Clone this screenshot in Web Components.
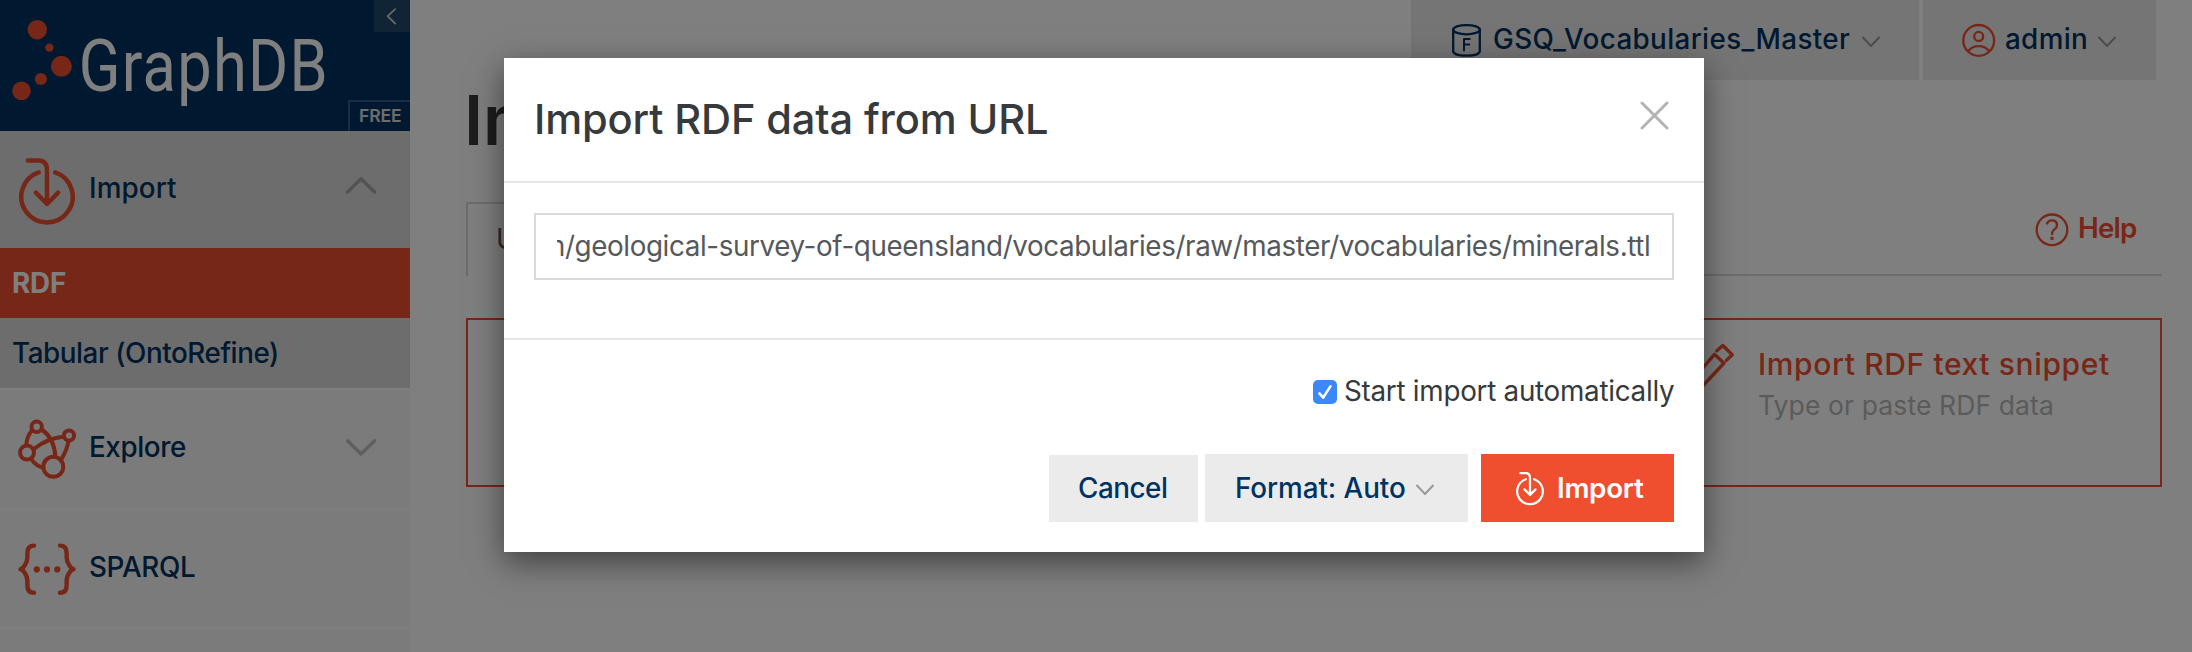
<!DOCTYPE html>
<html lang="en">
<head>
<meta charset="utf-8">
<title>GraphDB Workbench</title>
<style>
html,body{margin:0;height:100%;overflow:hidden;background:#fff}
body{font-family:Inter,"Liberation Sans",sans-serif;--navy:#003361;--orange:#ef4e2f}
</style>
</head>
<body>
<gdb-app></gdb-app>
<script>
const sheet = (el, html) => { el.attachShadow({mode:'open'}).innerHTML = html; };

/* Text whose inked width is w pixels; spacing is spread between the letters. */
const pen = document.createElement('canvas').getContext('2d');
customElements.define('ui-text', class extends HTMLElement {
  constructor(){ super(); sheet(this, `<style>
    :host{display:block;flex:none;white-space:pre;line-height:1}
    span{display:block}</style><span><slot></slot></span>`); }
  connectedCallback(){
    const a = n => this.getAttribute(n), size = a('size') || 27.8, weight = a('weight') || 500, font = a('font') || 'Inter';
    const span = this.shadowRoot.querySelector('span'), text = this.textContent;
    this.style.fontSize = size + 'px'; this.style.fontWeight = weight; this.style.fontFamily = font + ',sans-serif';
    if (a('w')) {
      pen.font = `${weight} ${size}px ${font}`;
      const m = pen.measureText(text);
      span.style.letterSpacing = (a('w') - m.actualBoundingBoxLeft - m.actualBoundingBoxRight) / (text.length - 1) + 'px';
      span.style.marginLeft = m.actualBoundingBoxLeft + 'px';
      this.style.width = a('w') + 'px';
    }
  }
});

const importShape = '<path d="M38.7 172.4A25.7 25.7 0 1 0 55.3 172.4M27.8 160.4H38.5Q47 160.4 47 170V204M36 192.7L47 204L58 192.7"/>';
const icons = {
  import:['17 156 60 71',4.5,importShape],
  explore:['17 418 60 62',4,'<circle cx="36.7" cy="426.8" r="5.2"/><circle cx="69" cy="435.5" r="5.1"/><circle cx="27" cy="452.6" r="7"/><circle cx="53.3" cy="466.8" r="10"/><path d="M31.8 430.5Q26.5 437 26.3 445.5M41.8 429.5Q54.5 438.5 55.3 456.5M33.8 449Q48 438 63.5 436.8M68.5 441Q67 450 61.5 459M31 458.8Q36.5 466.5 43.3 467.5"/>'],
  sparql:['17 541 60 57',4.4,'<path d="M34 545.6Q27.4 545.6 27.4 553V557C27.4 564 22 569.2 20.5 569.2C22 569.2 27.4 574 27.4 581V585.5Q27.4 592.8 34 592.8M60 545.6Q66.6 545.6 66.6 553V557C66.6 564 72 569.2 73.5 569.2C72 569.2 66.6 574 66.6 581V585.5Q66.6 592.8 60 592.8"/><g fill="currentColor" stroke="none"><circle cx="36.8" cy="569.4" r="3.1"/><circle cx="47" cy="569.4" r="3.1"/><circle cx="57.3" cy="569.4" r="3.1"/></g>'],
  up:['345 177 32 18',3.4,'<path d="M347.6 192L361 178.8L374.6 192"/>'],
  down:['345 438 32 18',3.4,'<path d="M347.6 440.7L361 454L374.6 440.7"/>'],
  caret:['0 0 20 12',2,'<path d="M2 1.5L10 10L18 1.5"/>'],
  left:['385 7 14 18',1.6,'<path d="M395.3 9L387.6 16.2L395.3 23.6"/>'],
  close:['1639 100 30 30',3,'<path d="M1642 103L1667 128M1667 103L1642 128"/>'],
  db:['1450 22 33 37',2.3,'<ellipse cx="1466.5" cy="29.7" rx="13.3" ry="4.6"/><path d="M1453.2 29.7V51C1453.2 54 1459 55.7 1466.5 55.7S1479.8 54 1479.8 51V29.7"/><path stroke-width="2" d="M1464 50.5V39H1469.8M1464 44.5H1469.2"/>'],
  user:['1961 22 36 37',2.3,'<circle cx="1978.7" cy="40.4" r="15.4"/><circle cx="1978.7" cy="36.4" r="4.5"/><path d="M1968.3 51Q1972.3 46.2 1978.7 46.2T1989.1 51"/>'],
  help:['2034 212 36 36',2.3,'<circle cx="2052" cy="229.8" r="15.3"/><path d="M2047 223.5Q2048.3 220.3 2052 220.3Q2057 220.3 2057 225Q2057 227.3 2054.8 229.1Q2052 231.1 2052 234.2"/><circle cx="2052" cy="238.3" r=".7"/>'],
  pencil:['1684 342 54 64',3.4,'<path d="M1716.8 350.8L1722.8 345.5L1732.2 354.8L1726.4 360.4M1714.4 354.3L1724 363.2L1697 392L1687 396L1690 383Z"/>'],
  dots:['10 18 64 84',0,'<g fill="currentColor"><circle cx="37.3" cy="29.7" r="9.7"/><circle cx="49.4" cy="47.6" r="4.2"/><circle cx="61.4" cy="66.3" r="10.5"/><circle cx="40.9" cy="79" r="6.1"/><circle cx="21.5" cy="90.8" r="9.3"/></g>'],
  check:['0 0 24 24',2.6,'<path d="M6.4 13.4L10.2 17.6L17.4 6.4"/>']
};
customElements.define('ui-icon', class extends HTMLElement {
  constructor(){ super(); sheet(this, '<style>:host{display:block;flex:none}svg{display:block;fill:none;stroke:currentColor;stroke-linecap:round;stroke-linejoin:round}</style><div></div>'); }
  connectedCallback(){
    const [box, sw, body] = icons[this.getAttribute('name')], b = box.split(' ');
    const w = this.getAttribute('width') || b[2], h = this.getAttribute('height') || b[3];
    this.shadowRoot.querySelector('div').innerHTML =
      `<svg width="${w}" height="${h}" viewBox="${box}" stroke-width="${this.getAttribute('stroke') || sw}">${body}</svg>`;
  }
});

customElements.define('gdb-logo', class extends HTMLElement {
  constructor(){ super(); sheet(this, `<style>
    :host{display:block;position:relative;height:131px;background:var(--navy);color:#fff;overflow:hidden}
    .row{display:flex;padding:18px 0 0 10px;gap:8px;height:100%;box-sizing:border-box}
    ui-icon{color:var(--orange)}
    .name{transform:scaleX(.84);transform-origin:0 0;margin-top:12px}
    .fold{position:absolute;right:0;top:0;width:36px;height:32px;background:#20486b;display:flex;align-items:center;justify-content:center}
    .fold ui-icon{color:#ddd}
    .free{position:absolute;right:0;bottom:0;width:60px;height:29px;border:solid #335c81;border-width:2px 0 0 2px;box-sizing:content-box;display:flex;align-items:center;padding-left:0}
    .free ui-text{margin:-1px 0 0 10px;color:#dadada}
    </style><div class="row"><ui-icon name="dots"></ui-icon>
    <ui-text class="name" font="Roboto" size="73" weight="400" w="289">GraphDB</ui-text></div>
    <div class="fold"><ui-icon name="left"></ui-icon></div>
    <div class="free"><ui-text size="17.6" w="41" weight="600">FREE</ui-text></div>`); }
});

customElements.define('nav-item', class extends HTMLElement {
  constructor(){ super(); sheet(this, `<style>
    :host{display:block;background:#f6f6f6;color:var(--navy);border-bottom:2px solid #fff}
    :host([open]){background:#dadada;border:0}
    .row{display:flex;align-items:center;height:var(--h,118px);padding:0 33px 0 17px}
    slot{display:block;margin-left:14px;margin-top:-2px}
    [name=icon]{margin:0;width:60px;color:var(--orange)}
    [name=arrow]{margin-left:auto;margin-top:0;color:#bfbfbf}
    :host([open]) [name=arrow]{color:#a6a6a6}
    </style><div class="row"><slot name="icon"></slot><slot></slot><slot name="arrow"></slot></div>`); }
});

customElements.define('nav-sub', class extends HTMLElement {
  constructor(){ super(); sheet(this, `<style>
    :host{display:flex;align-items:center;height:70px;box-sizing:border-box;padding:2px 0 0 13px;background:#dadada;color:var(--navy)}
    :host([active]){background:var(--orange);color:#fff}
    </style><slot></slot>`); }
});

customElements.define('gdb-sidebar', class extends HTMLElement {
  constructor(){ super(); sheet(this, `<style>
    :host{display:block;background:#f6f6f6;height:652px;overflow:hidden}
    .rule{height:2px;background:#fff}
    </style>
    <gdb-logo></gdb-logo>
    <nav-item open style="--h:117px"><ui-icon slot="icon" name="import" style="margin-top:4px"></ui-icon><ui-text w="85">Import</ui-text><ui-icon slot="arrow" name="up" style="margin-top:-7px"></ui-icon></nav-item>
    <nav-sub active><ui-text w="53" weight="700">RDF</ui-text></nav-sub>
    <nav-sub><ui-text w="264">Tabular (OntoRefine)</ui-text></nav-sub>
    <div class="rule"></div>
    <nav-item><ui-icon slot="icon" name="explore"></ui-icon><ui-text w="95">Explore</ui-text><ui-icon slot="arrow" name="down" style="margin-top:-4px"></ui-icon></nav-item>
    <nav-item style="--h:117px"><ui-icon slot="icon" name="sparql" style="margin-top:1px"></ui-icon><ui-text w="105" style="margin-left:-1px">SPARQL</ui-text></nav-item>`); }
});

customElements.define('gdb-topbar', class extends HTMLElement {
  constructor(){ super(); sheet(this, `<style>
    :host{display:flex;justify-content:flex-end;gap:4px;height:80px;padding-right:36px;color:var(--navy)}
    div{display:flex;align-items:center;background:#ebebeb;box-sizing:border-box}
    .repo{width:508px;padding-left:39px}.user{width:233px;padding-left:38px}
    .repo ui-text{margin:-1px 11px 0}.user ui-text{margin:-1px 11px 0 9px}
    .user ui-icon:first-child{color:var(--orange)}
    .c{color:#999;margin-top:3px}
    </style>
    <div class="repo"><ui-icon name="db"></ui-icon><ui-text w="356">GSQ_Vocabularies_Master</ui-text><ui-icon class="c" name="caret"></ui-icon></div>
    <div class="user"><ui-icon name="user"></ui-icon><ui-text w="80">admin</ui-text><ui-icon class="c" name="caret"></ui-icon></div>`); }
});

customElements.define('gdb-main', class extends HTMLElement {
  constructor(){ super(); sheet(this, `<style>
    :host{display:block;min-width:0}
    .body{padding:6px 30px 0 56px}
    h1{margin:0;height:70px;color:#373a3c}
    .tabs{display:flex;height:74px;margin-top:46px;box-sizing:border-box}
    .tab{width:200px;border:2px solid #d9d9d9;border-bottom:0;box-sizing:border-box;display:flex;align-items:center;padding-left:30px;color:#55595c}
    .rest{flex:1;border-bottom:2px solid #d9d9d9;display:flex;justify-content:flex-end;padding:10px 25px 0 0;gap:10px;color:var(--orange)}
    .rest ui-text{margin-top:3px}
    .actions{display:grid;grid-template-columns:1fr 1fr 476px;height:169px;box-sizing:border-box;border:2px solid var(--orange);margin-top:42px}
    .cell{grid-column:3;display:flex;color:var(--orange);padding:22px 0 0 0;gap:22px}
    .copy{display:flex;flex-direction:column;gap:13px;padding-top:7px}
    .copy ui-text+ui-text{color:#b6b6b6;margin-left:-1px}
    </style>
    <gdb-topbar></gdb-topbar>
    <div class="body">
      <h1><ui-text size="69" style="margin-left:-2px" weight="600">Import</ui-text></h1>
      <div class="tabs"><div class="tab"><ui-text weight="400" w="120">User data</ui-text></div>
        <div class="rest"><ui-icon name="help"></ui-icon><ui-text weight="600" w="57">Help</ui-text></div></div>
      <div class="actions"><div class="cell"><ui-icon name="pencil"></ui-icon>
        <div class="copy"><ui-text size="30" w="349">Import RDF text snippet</ui-text><ui-text size="26.5" weight="400" w="293">Type or paste RDF data</ui-text></div></div></div>
    </div>`); }
});

customElements.define('ui-button', class extends HTMLElement {
  constructor(){ super(); sheet(this, `<style>
    :host{display:flex;align-items:center;height:68px;box-sizing:border-box;background:#ebebeb;color:var(--navy)}
    :host([primary]){background:var(--orange);color:#fff}
    </style><slot></slot>`); }
});

customElements.define('import-dialog', class extends HTMLElement {
  constructor(){ super(); sheet(this, `<style>
    :host{display:block;width:1200px;height:494px;background:#fff;color:#373a3c;box-shadow:0 10px 30px rgba(0,0,0,.5)}
    header{display:flex;justify-content:space-between;height:123px;padding:0 35px 0 33px;border-bottom:2px solid #e5e5e5}
    header ui-text{margin-top:41px}
    header ui-icon{margin-top:42px;color:#b3b3b3}
    .field{height:155px;box-sizing:border-box;padding:30px 30px 0;border-bottom:0}
    .input{height:67px;box-sizing:border-box;border:2px solid #d9d9d9;padding:1px 23px 0 21px;display:flex;color:#55595c}
    .clip{flex:1;overflow:hidden;display:flex;justify-content:flex-end;align-items:center}
    footer{border-top:2px solid #e5e5e5;padding:40px 30px 0}
    label{display:flex;justify-content:flex-end;align-items:center;gap:8px;height:24px}
    label ui-text{margin-top:-1px}
    .box{width:24px;height:24px;border-radius:5px;background:#3b88fd;color:#fff}
    .buttons{display:flex;justify-content:flex-end;align-items:flex-end;margin-top:50px}
    .buttons ui-text{margin-top:1px}
    </style>
    <header><ui-text size="41.6" w="510">Import RDF data from URL</ui-text><ui-icon name="close"></ui-icon></header>
    <div class="field"><div class="input"><div class="clip"><ui-text weight="400" w="1106">m/geological-survey-of-queensland/vocabularies/raw/master/vocabularies/minerals.ttl</ui-text></div></div></div>
    <footer><label><span class="box"><ui-icon name="check"></ui-icon></span><ui-text weight="400" w="329">Start import automatically</ui-text></label>
    <div class="buttons">
      <ui-button style="width:149px;height:67px;padding-left:30px;margin-right:7px"><ui-text w="87">Cancel</ui-text></ui-button>
      <ui-button style="width:263px;padding-left:32px;margin-right:13px"><ui-text w="168">Format: Auto</ui-text><ui-icon name="caret" style="color:#999;margin:4px 0 0 10px"></ui-icon></ui-button>
      <ui-button primary style="width:193px;padding-left:34px"><ui-icon name="import" width="30" height="35.5" stroke="4.5" style="margin-top:2px"></ui-icon><ui-text w="85" weight="600" style="margin-left:14px">Import</ui-text></ui-button>
    </div></footer>`); }
});

customElements.define('gdb-app', class extends HTMLElement {
  constructor(){ super(); sheet(this, `<style>
    :host{display:grid;grid-template-columns:410px 1fr;height:652px;overflow:hidden;background:#fff}
    .overlay{position:absolute;inset:0;box-sizing:border-box;background:rgba(0,0,0,.5);display:flex;justify-content:center;align-items:flex-start;padding:58px 0 0 16px}
    </style><gdb-sidebar></gdb-sidebar><gdb-main></gdb-main>
    <div class="overlay"><import-dialog></import-dialog></div>`); }
});
</script>
</body>
</html>
